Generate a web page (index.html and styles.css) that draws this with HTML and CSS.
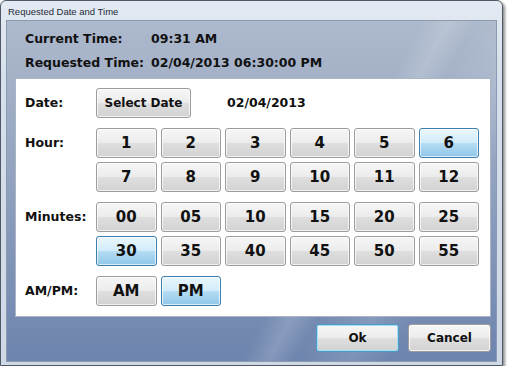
FILE: index.html
```html
<!DOCTYPE html>
<html lang="en">
<head>
    <meta charset="UTF-8">
    <title>Requested Date and Time</title>
    <link rel="stylesheet" href="styles.css">
</head>
<body>

    <!-- Dialog Window -->
    <div class="window">
        <div class="titlebar">Requested Date and Time</div>

        <div class="client">
            <!-- Header -->
            <div class="info">
                <div class="info-row"><span class="info-label">Current Time:</span><span>09:31 AM</span></div>
                <div class="info-row"><span class="info-label">Requested Time:</span><span>02/04/2013 06:30:00 PM</span></div>
            </div>

            <!-- Picker Panel -->
            <div class="panel">
                <div class="section">
                    <span class="label">Date:</span>
                    <button class="btn btn-date">Select Date</button>
                    <span class="date-value">02/04/2013</span>
                </div>

                <div class="section">
                    <span class="label">Hour:</span>
                    <div class="grid">
                        <button class="btn">1</button>
                        <button class="btn">2</button>
                        <button class="btn">3</button>
                        <button class="btn">4</button>
                        <button class="btn">5</button>
                        <button class="btn selected">6</button>
                        <button class="btn">7</button>
                        <button class="btn">8</button>
                        <button class="btn">9</button>
                        <button class="btn">10</button>
                        <button class="btn">11</button>
                        <button class="btn">12</button>
                    </div>
                </div>

                <div class="section">
                    <span class="label">Minutes:</span>
                    <div class="grid">
                        <button class="btn">00</button>
                        <button class="btn">05</button>
                        <button class="btn">10</button>
                        <button class="btn">15</button>
                        <button class="btn">20</button>
                        <button class="btn">25</button>
                        <button class="btn selected">30</button>
                        <button class="btn">35</button>
                        <button class="btn">40</button>
                        <button class="btn">45</button>
                        <button class="btn">50</button>
                        <button class="btn">55</button>
                    </div>
                </div>

                <div class="section">
                    <span class="label">AM/PM:</span>
                    <div class="grid">
                        <button class="btn">AM</button>
                        <button class="btn selected">PM</button>
                    </div>
                </div>
            </div>

            <!-- Dialog Buttons -->
            <div class="actions">
                <button class="btn btn-action default">Ok</button>
                <button class="btn btn-action">Cancel</button>
            </div>
        </div>
    </div>

</body>
</html>
```

FILE: styles.css
```css
/* Windows 7 style dialog */
body {
    margin: 0;
    padding: 0;
    background-color: #ffffff;
    font-family: 'DejaVu Sans', sans-serif;
}

.window {
    width: 501px;
    height: 364px;
    display: flex;
    flex-direction: column;
    background: linear-gradient(#e3eaf3, #d6e0ec 20%, #cfd9e6);
    border: 1px solid #4f5966;
    border-radius: 6px 6px 0 0;
    box-shadow: 2px 2px 3px rgba(0, 0, 0, 0.45);
}

.titlebar {
    height: 19px;
    line-height: 22px;
    padding-left: 7px;
    font-family: 'Liberation Sans', sans-serif;
    font-size: 9.5px;
    color: #1f2a38;
}

.client {
    flex: 1;
    margin: 0 5px 3px 5px;
    padding: 5px 5px 0 8px;
    display: flex;
    flex-direction: column;
    background:
        linear-gradient(118deg, transparent 62%, rgba(255, 255, 255, 0.16) 66%, transparent 70%, rgba(255, 255, 255, 0.12) 78%, transparent 84%),
        linear-gradient(#adb9cc, #96a6c1 40%, #6d84ae);
    border: 1px solid #8c9ab0;
}

/* Header */
.info {
    padding-left: 10px;
    margin-bottom: 4px;
    font-size: 12.5px;
    font-weight: bold;
    color: #111111;
}

.info-row {
    display: flex;
    height: 24px;
    align-items: center;
}

.info-label {
    width: 126px;
}

/* Panel */
.panel {
    background-color: #ffffff;
    border: 1px solid #aab4c4;
    padding: 9px 10px 10px 9px;
    display: flex;
    flex-direction: column;
    gap: 10px;
}

.section {
    display: flex;
    align-items: flex-start;
}

.label {
    width: 71px;
    flex-shrink: 0;
    line-height: 30px;
    font-size: 12.5px;
    font-weight: bold;
    color: #111111;
}

.date-value {
    margin-left: 36px;
    line-height: 30px;
    font-size: 12.5px;
    font-weight: bold;
    color: #111111;
}

.grid {
    display: grid;
    grid-template-columns: repeat(6, 60.5px);
    gap: 4px;
}

/* Buttons */
.btn {
    height: 30px;
    margin: 0;
    padding: 0;
    font-family: 'DejaVu Sans', sans-serif;
    font-size: 15px;
    font-weight: bold;
    color: #111111;
    border: 1px solid #9c9c9c;
    border-radius: 3px;
    background: linear-gradient(#f6f6f6, #ececec 48%, #dedede 52%, #d2d2d2);
    box-shadow: inset 0 0 0 1px rgba(255, 255, 255, 0.7);
}

.btn.selected {
    border-color: #3c7fb1;
    background: linear-gradient(#eaf6fd, #d2ecfa 48%, #b4dcf3 52%, #90c6e8);
}

.btn-date {
    width: 95px;
    font-size: 12px;
}

/* Dialog Buttons */
.actions {
    display: flex;
    justify-content: flex-end;
    gap: 9px;
    padding: 7px 0 0 0;
}

.btn-action {
    width: 83px;
    height: 28px;
    font-size: 12px;
}

.btn-action.default {
    border-color: #4e9cc6;
    box-shadow: inset 0 0 0 1px #9fe0f6;
}
```
